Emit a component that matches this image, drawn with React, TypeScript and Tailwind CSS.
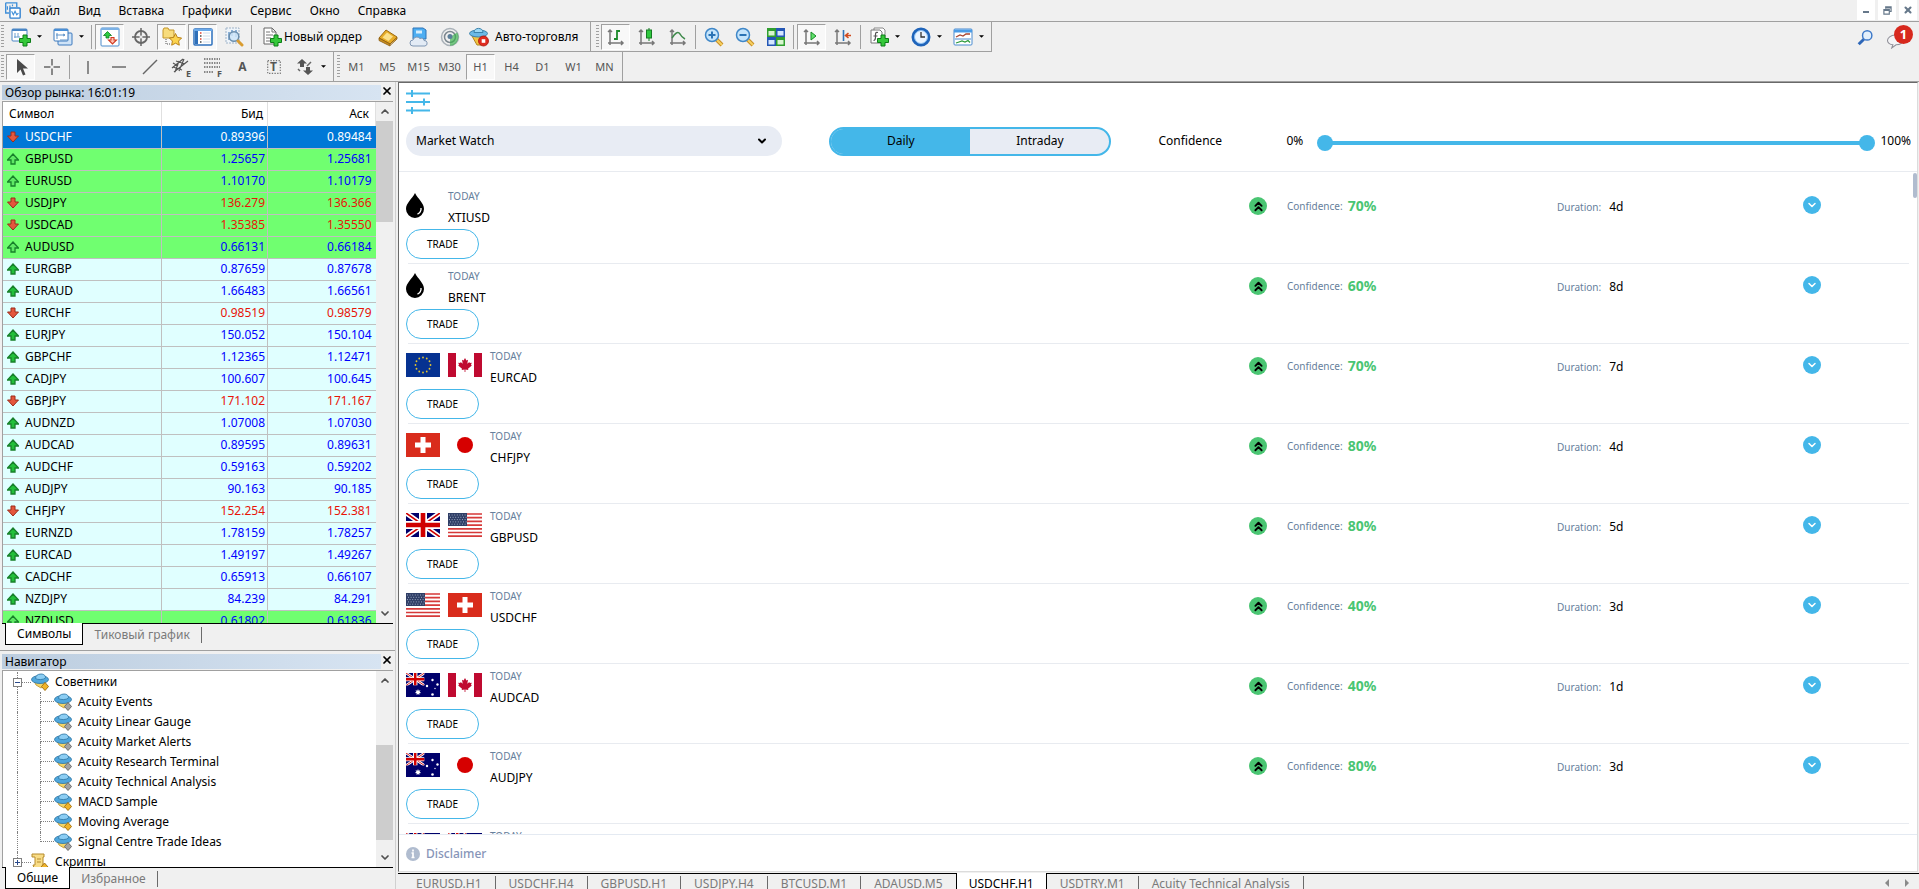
import React, { useState } from "react";
import { ChevronDown, ChevronUp, ChevronsUp, X } from "lucide-react";
import clsx from "clsx";

type IconProps = { children: React.ReactNode; size?: string };

const Icon = ({ children, size = "size-5" }: IconProps) => (
  <svg viewBox="0 0 20 20" fill="none" className={clsx("shrink-0", size)} aria-hidden="true">
    {children}
  </svg>
);

const GreenPlus = () => (
  <path
    d="M12 8h4v3.500h3.500v4H16V19h-4v-3.500H8.500v-4H12z"
    fill="#35c83a"
    stroke="#0d7d18"
    strokeWidth="1"
  />
);

const icons = {
  app: (
    <>
      <path d="M2 1h13v5M2 1v12h4" stroke="#3f8fd8" strokeWidth="1.600" />
      <path d="M4 9V5M7 8V4M10 5V3" stroke="#3f8fd8" strokeWidth="1.400" />
      <rect x="7" y="7" width="12" height="12" rx="1" fill="#fff" stroke="#2d7fcf" strokeWidth="1.600" />
      <path d="M9 11l2 4 2-4 2 4 2-2" stroke="#3f8fd8" strokeWidth="1.300" />
    </>
  ),
  newChart: (
    <>
      <rect x="1" y="2" width="15" height="12" rx="1" fill="#fff" stroke="#4a86c5" />
      <path d="M1 3h15" stroke="#4a86c5" strokeWidth="2" />
      <path d="M4 6v5M7 6v4M3 10h6" stroke="#6b9fd0" />
      <GreenPlus />
    </>
  ),
  profiles: (
    <>
      <rect x="5" y="6" width="14" height="12" rx="1" fill="#cfe3f7" stroke="#3a78bd" />
      <rect x="1" y="2" width="14" height="12" rx="1" fill="#fff" stroke="#3a78bd" />
      <path d="M1 3h14" stroke="#4a8fd6" strokeWidth="2" />
      <path d="M4 6v6M3 8h9M10 7l2 1-2 1M7 13h8" stroke="#5f93c9" />
    </>
  ),
  marketWatch: (
    <>
      <rect x="1" y="1" width="18" height="18" rx="1" fill="#fff" stroke="#4d8ccc" />
      <path d="M1 2h18" stroke="#7cb2e6" strokeWidth="2" />
      <path d="M3.500 8.500L7.500 4.500l4 4H9v2.500H6V8.500z" fill="#2ecc40" stroke="#0e7d20" strokeWidth=".8" />
      <path d="M8.500 13H11v-2.500h3V13h2.500l-4 4z" fill="#ffc2b4" stroke="#d13a20" strokeWidth="1.100" />
    </>
  ),
  target: (
    <>
      <circle cx="10" cy="10" r="6" stroke="#666" strokeWidth="1.800" />
      <path d="M10 1v18M1 10h18" stroke="#666" strokeWidth="1.500" />
      <path d="M8.500 10h3M10 8.500v3" stroke="#f0f0f0" strokeWidth="1.500" />
    </>
  ),
  folderStar: (
    <>
      <path d="M1 3l1-2h4l1 2h5v8H1z" fill="#f8dc7c" stroke="#c3962a" />
      <path d="M4 12v5h4" stroke="#555" strokeDasharray="1 1" />
      <path
        d="M13.500 6.500l1.900 3.900 4.200.6-3 3 .7 4.200-3.800-2-3.800 2 .7-4.200-3-3 4.200-.6z"
        fill="#fbd34e"
        stroke="#b98218"
      />
    </>
  ),
  terminal: (
    <>
      <rect x="1" y="2" width="18" height="16" rx="1" fill="#fff" stroke="#2c70bd" strokeWidth="1.500" />
      <path d="M1 3h18" stroke="#6aa9ea" strokeWidth="2" />
      <rect x="2" y="4" width="3" height="13" fill="#2d6fb9" />
      <path d="M7 6h1.500M7 12h1.500" stroke="#e04030" strokeWidth="1.500" />
      <path d="M7 9h1.500M7 15h1.500" stroke="#444" strokeWidth="1.300" />
      <path d="M10 6h7M10 9h7M10 12h7M10 15h7" stroke="#cfdceb" />
    </>
  ),
  tester: (
    <>
      <path d="M2 1h13v15H2z" fill="#eef4fa" stroke="#9fb3c8" strokeDasharray="2 1" />
      <path d="M5 13V5M8 9V3M12 10V3" stroke="#5b8fc4" strokeWidth="1.300" />
      <circle cx="10" cy="9.500" r="4.800" fill="#cfe5f8" fillOpacity=".85" stroke="#6b8ead" strokeWidth="1.500" />
      <path d="M14 14l4 4" stroke="#d99c30" strokeWidth="3" strokeLinecap="round" />
    </>
  ),
  order: (
    <>
      <path d="M2 1h8l4 4v12H2z" fill="#fff" stroke="#666" />
      <path d="M10 1v4h4M4 5h4M4 8h7M4 11h5M4 14h4" stroke="#777" />
      <GreenPlus />
    </>
  ),
  book: (
    <>
      <path d="M1 11l7-8 11 7-7 7z" fill="#e7ac28" stroke="#9c6a12" />
      <path d="M4.500 10.500l4.500-5 6 4-4.500 4.500z" fill="#fbe08a" />
      <path d="M1 11v2.500l11 5.500V17zM12 18.500l7-6.500v-2" fill="#c98f1e" stroke="#8a5b10" strokeWidth=".8" />
    </>
  ),
  cloud: (
    <>
      <path d="M4 1h10l3 2v9H4z" fill="#4eaef2" stroke="#2d74b8" />
      <path d="M7 3.500h6v3H7z" fill="#d8eefc" />
      <path
        d="M4 19a3 3 0 0 1 0-6 4 4 0 0 1 7-1.500 3 3 0 0 1 4 2 2.800 2.800 0 0 1 1 5.500z"
        fill="#e3ebf5"
        stroke="#7f96b3"
      />
    </>
  ),
  signal: (
    <>
      <circle cx="10" cy="10" r="8.500" stroke="#a9b1b8" strokeWidth="1.500" />
      <circle cx="10" cy="10" r="5.500" stroke="#7d8890" strokeWidth="1.500" />
      <path d="M10 10v8.700a8.500 8.500 0 0 0 8.500-8.700c0-2-.5-3-1.500-4.500z" fill="#37b24a" fillOpacity=".65" />
      <circle cx="10" cy="9.500" r="2.500" fill="#5c7f9a" />
    </>
  ),
  autoTrade: (
    <>
      <path d="M3 9h13l-3 9H8z" fill="#f1c443" stroke="#b3841d" />
      <ellipse cx="9.500" cy="6.500" rx="9" ry="3.500" fill="#6bb9e6" stroke="#3b82ab" />
      <path d="M5 5.500C5 0 14 0 14 5.500z" fill="#9ad8f6" stroke="#3b82ab" />
      <circle cx="14.500" cy="14" r="5" fill="#e02b20" stroke="#a9130c" strokeWidth=".8" />
      <rect x="12.700" y="12.200" width="3.600" height="3.600" fill="#fff" />
    </>
  ),
  bars: (
    <>
      <path d="M4 3v15M2 16h15M2 5l2-2 2 2M15 14l2 2-2 2" stroke="#777" strokeWidth="1.500" />
      <path d="M11 3v10M11 4h3M8 12h3" stroke="#1d8a2c" strokeWidth="1.800" />
    </>
  ),
  candles: (
    <>
      <path d="M4 3v15M2 16h15M2 5l2-2 2 2M15 14l2 2-2 2" stroke="#777" strokeWidth="1.500" />
      <path d="M12 1v13" stroke="#157a22" />
      <rect x="9.500" y="3" width="5" height="8" fill="#2fc83e" stroke="#157a22" />
    </>
  ),
  line: (
    <>
      <path d="M4 3v15M2 16h15M2 5l2-2 2 2M15 14l2 2-2 2" stroke="#777" strokeWidth="1.500" />
      <path d="M4 11c3-5 6-7 8-4 1 2 3 4 5 5" stroke="#3f8a4b" strokeWidth="1.500" />
    </>
  ),
  zoomIn: (
    <>
      <path d="M12 12l6 6" stroke="#c78e26" strokeWidth="4" />
      <path d="M12 12l6 6" stroke="#f6d060" strokeWidth="2" />
      <circle cx="8" cy="8" r="6.500" fill="#c4e4fb" stroke="#3f87c8" strokeWidth="1.500" />
      <path d="M4.500 8h7M8 4.500v7" stroke="#2a73b5" strokeWidth="2" />
    </>
  ),
  zoomOut: (
    <>
      <path d="M12 12l6 6" stroke="#c78e26" strokeWidth="4" />
      <path d="M12 12l6 6" stroke="#f6d060" strokeWidth="2" />
      <circle cx="8" cy="8" r="6.500" fill="#c4e4fb" stroke="#3f87c8" strokeWidth="1.500" />
      <path d="M4.500 8h7" stroke="#2a73b5" strokeWidth="2" />
    </>
  ),
  tile: (
    <>
      <path d="M1 1h9v9H1z" fill="#2f9e2f" />
      <path d="M10 1h9v9h-9z" fill="#2457b5" />
      <path d="M1 10h9v9H1z" fill="#2457b5" />
      <path d="M10 10h9v9h-9z" fill="#2f9e2f" />
      <path d="M2.500 4h6v4.500h-6zM11.500 13h6v4.500h-6z" fill="#d8f5d0" />
      <path d="M11.500 4h6v4.500h-6zM2.500 13h6v4.500h-6z" fill="#d4e6ff" />
    </>
  ),
  autoScroll: (
    <>
      <path d="M4 3v15M2 16h15M2 5l2-2 2 2M15 14l2 2-2 2" stroke="#777" strokeWidth="1.500" />
      <path d="M9 5l5 4-5 4z" fill="#5fe06a" stroke="#168a25" />
    </>
  ),
  shift: (
    <>
      <path d="M4 3v15M2 16h15M2 5l2-2 2 2M15 14l2 2-2 2" stroke="#777" strokeWidth="1.500" />
      <path d="M10.500 3v11" stroke="#2f74b8" strokeWidth="1.600" />
      <path d="M18 8.500h-5M15.500 6l-3 2.500 3 2.500" stroke="#d04a1e" strokeWidth="1.600" />
    </>
  ),
  indicators: (
    <>
      <path d="M5 3V1h9l2 2v11" fill="#fff" stroke="#888" />
      <path d="M2 3h9l2 2v11H2z" fill="#fff" stroke="#777" />
      <path d="M9 5.500c-3-1-2.500 2-2.500 4s0 4-2 4M4.500 9h4" stroke="#555" strokeWidth="1.200" />
      <GreenPlus />
    </>
  ),
  clock: (
    <>
      <circle cx="10" cy="10" r="8" fill="#eaf4ff" stroke="#1f64ba" strokeWidth="3" />
      <circle cx="10" cy="10" r="6.500" stroke="#8bc0f3" />
      <path d="M10 5v5h4" stroke="#333" strokeWidth="1.300" />
    </>
  ),
  template: (
    <>
      <rect x="1" y="2" width="18" height="16" rx="1" fill="#fff" stroke="#4a8bd0" />
      <path d="M1 4h18" stroke="#4a9be6" strokeWidth="3" />
      <path d="M3 10l4-2 3 1 3-2 4 0" stroke="#a84430" strokeWidth="1.300" />
      <path d="M2 12h16" stroke="#4a8bd0" />
      <path d="M3 16l3-1 3-1 3 1 3-1.500 2 2" stroke="#2d9a3b" strokeWidth="1.300" />
    </>
  ),
  cursor: <path d="M6 2v14l3.500-3.500 2.500 6 2.500-1-2.500-6h5z" fill="#4a4a4a" />,
  cross: <path d="M10 2v6.500M10 11.500V18M2 10h6.500M11.500 10H18" stroke="#666" strokeWidth="1.500" />,
  vline: <path d="M10 4v13" stroke="#555" strokeWidth="1.300" />,
  hline: <path d="M3 10h14" stroke="#555" strokeWidth="1.300" />,
  trend: <path d="M3 17L17 3" stroke="#666" strokeWidth="1.500" />,
  channel: (
    <path d="M1 11L12 2M3 15L17 4M2 6l5 3M5 4l9 3M2 10l9 3M4 15L8 4M8 14l5-12" stroke="#555" strokeWidth="1.200" />
  ),
  fibo: <path d="M2 2h16M2 6h16M2 10h16M2 15h9" stroke="#666" strokeWidth="1.300" strokeDasharray="1.500 1" />,
  label: (
    <rect x="3" y="3" width="14" height="14" stroke="#777" strokeWidth="1.300" strokeDasharray="1.500 1.500" />
  ),
  arrows: (
    <>
      <path d="M7 2l5 4.500H9V10H5V6.500H2zM13 18l-5-4.500h3V10h4v3.500h3z" fill="#555" />
      <path d="M3 12l2 2M12 9l4-4" stroke="#666" strokeWidth="1.500" />
    </>
  ),
  search: (
    <>
      <path d="M8 12l-6 6" stroke="#2c66b8" strokeWidth="3.500" />
      <circle cx="12" cy="7.500" r="5.500" fill="#e3effb" stroke="#3c78c8" strokeWidth="1.700" />
    </>
  ),
};

type IconName = keyof typeof icons;

const Sep = () => <span className="mx-0.5 h-6 w-px shrink-0 bg-[#a0a0a0]" />;

const Grip = () => (
  <span className="mx-px h-6 w-[3px] shrink-0 bg-[repeating-linear-gradient(#a0a0a0_0_1px,transparent_1px_3px)]" />
);

const Caret = () => (
  <svg viewBox="0 0 6 3" className="h-[3px] w-[5px] shrink-0 fill-black" aria-hidden="true">
    <path d="M0 0h6L3 3z" />
  </svg>
);

function ToolButton({
  icon,
  label,
  active,
  mark,
}: {
  icon: IconName;
  label: string;
  active?: boolean;
  mark?: string;
}) {
  return (
    <button
      aria-label={label}
      className={clsx(
        "relative mx-px flex h-[26px] w-[29px] shrink-0 items-center justify-center",
        active && "border border-b-white border-l-[#a0a0a0] border-r-white border-t-[#a0a0a0] bg-[#f8f8f8]"
      )}
    >
      <Icon>{icons[icon]}</Icon>
      {mark && (
        <span className="absolute bottom-0.5 right-1 text-[9px] font-bold leading-2 text-[#555]">{mark}</span>
      )}
    </button>
  );
}

function DropButton({ icon, label }: { icon: IconName; label: string }) {
  return (
    <button aria-label={label} className="flex h-[26px] w-[42px] shrink-0 items-center justify-center gap-1.5">
      <Icon>{icons[icon]}</Icon>
      <Caret />
    </button>
  );
}

const menuItems = ["Файл", "Вид", "Вставка", "Графики", "Сервис", "Окно", "Справка"];
const timeframes = ["M1", "M5", "M15", "M30", "H1", "H4", "D1", "W1", "MN"];

function MenuBar() {
  return (
    <div className="flex h-[22px] items-center justify-between border-b border-[#a0a0a0]">
      <nav className="flex items-center">
        <span className="ml-1 mr-2">
          <Icon size="size-[17px]">{icons.app}</Icon>
        </span>
        {menuItems.map((item) => (
          <button key={item} className="mr-[18px] leading-5">
            {item}
          </button>
        ))}
      </nav>
      <div className="mr-0.5 flex gap-[3px] self-start text-[#66788a]">
        <button aria-label="Свернуть" className="flex h-5 w-[18px] items-center justify-center bg-white">
          <span className="mt-1 h-0.5 w-1.5 bg-[#66788a]" />
        </button>
        <button aria-label="Восстановить" className="flex h-5 w-[18px] items-center justify-center bg-white">
          <svg viewBox="0 0 10 10" className="size-[9px]" fill="none" stroke="currentColor">
            <path d="M3 3V1h6v5H7M3 2h6" strokeWidth="1.300" />
            <path d="M1 4h6v5H1zM1 5h6" strokeWidth="1.300" />
          </svg>
        </button>
        <button aria-label="Закрыть" className="flex h-5 w-[18px] items-center justify-center bg-white">
          <X className="size-[10px]" strokeWidth={5} />
        </button>
      </div>
    </div>
  );
}

function Toolbars() {
  return (
    <>
      <div className="flex h-[30px] items-center justify-between">
        <div className="flex h-full items-center border-b border-r border-[#a0a0a0] pr-0.5">
          <Grip />
          <DropButton icon="newChart" label="Новый график" />
          <DropButton icon="profiles" label="Профили" />
          <Sep />
          <ToolButton icon="marketWatch" label="Обзор рынка" active />
          <ToolButton icon="target" label="Окно данных" />
          <ToolButton icon="folderStar" label="Навигатор" active />
          <ToolButton icon="terminal" label="Терминал" active />
          <ToolButton icon="tester" label="Тестер стратегий" />
          <Sep />
          <button className="ml-2 flex w-[110px] items-center gap-0.5 whitespace-nowrap">
            <Icon>{icons.order}</Icon>
            Новый ордер
          </button>
          <ToolButton icon="book" label="MetaEditor" />
          <ToolButton icon="cloud" label="VPS" />
          <ToolButton icon="signal" label="Сигналы" />
          <button className="ml-1 flex w-[121px] items-center gap-1.5 whitespace-nowrap">
            <Icon>{icons.autoTrade}</Icon>
            Авто-торговля
          </button>
          <span className="mr-1 h-[29px] w-px bg-[#a0a0a0]" />
          <Grip />
          <ToolButton icon="bars" label="Бары" active />
          <ToolButton icon="candles" label="Свечи" />
          <ToolButton icon="line" label="Линия" />
          <Sep />
          <ToolButton icon="zoomIn" label="Приблизить" />
          <ToolButton icon="zoomOut" label="Отдалить" />
          <ToolButton icon="tile" label="Окна рядом" />
          <Sep />
          <ToolButton icon="autoScroll" label="Автопрокрутка" active />
          <ToolButton icon="shift" label="Сдвиг графика" />
          <Sep />
          <DropButton icon="indicators" label="Индикаторы" />
          <DropButton icon="clock" label="Периоды" />
          <DropButton icon="template" label="Шаблоны" />
        </div>
        <div className="mr-1.5 flex items-center gap-3">
          <button aria-label="Поиск">
            <Icon size="size-[17px]">{icons.search}</Icon>
          </button>
          <button aria-label="Уведомления" className="relative h-6 w-[27px]">
            <svg viewBox="0 0 16 14" className="absolute bottom-0 left-0 h-[15px] w-[18px]">
              <path d="M8 1c4 0 7 2 7 5s-3 4-6 4l-4 3 1-3c-3 0-5-2-5-4s3-5 7-5z" fill="#f4f4f6" stroke="#8f8f98" />
            </svg>
            <span className="absolute right-0 top-0 size-[19px] rounded-full bg-[#d7281d] text-[13px] font-bold leading-[19px] text-white">
              1
            </span>
          </button>
        </div>
      </div>
      <div className="flex h-[30px] items-center border-b border-[#a0a0a0]">
        <Grip />
        <ToolButton icon="cursor" label="Курсор" active />
        <ToolButton icon="cross" label="Перекрестие" />
        <Sep />
        <ToolButton icon="vline" label="Вертикальная линия" />
        <ToolButton icon="hline" label="Горизонтальная линия" />
        <ToolButton icon="trend" label="Трендовая линия" />
        <ToolButton icon="channel" label="Канал" mark="E" />
        <ToolButton icon="fibo" label="Фибоначчи" mark="F" />
        <button className="w-[31px] font-bold text-[#555]">A</button>
        <button className="relative mx-px flex h-[26px] w-[29px] items-center justify-center">
          <Icon size="size-[18px]">{icons.label}</Icon>
          <span className="absolute font-bold text-[#555]">T</span>
        </button>
        <DropButton icon="arrows" label="Стрелки" />
        <span className="mx-0.5 h-[29px] w-px bg-[#a0a0a0]" />
        <Grip />
        {timeframes.map((tf) => (
          <button
            key={tf}
            className={clsx(
              "mx-px h-[26px] w-[29px] shrink-0 text-[11px] text-[#555]",
              tf === "H1" && "border border-b-white border-l-[#a0a0a0] border-r-white border-t-[#a0a0a0] bg-[#f8f8f8]"
            )}
          >
            {tf}
          </button>
        ))}
        <span className="mx-0.5 h-[29px] w-px bg-[#a0a0a0]" />
      </div>
    </>
  );
}

type Quote = { symbol: string; bid: string; ask: string; down?: boolean; green?: boolean };

const quotes: Quote[] = [
  { symbol: "USDCHF", bid: "0.89396", ask: "0.89484", down: true },
  { symbol: "GBPUSD", bid: "1.25657", ask: "1.25681", green: true },
  { symbol: "EURUSD", bid: "1.10170", ask: "1.10179", green: true },
  { symbol: "USDJPY", bid: "136.279", ask: "136.366", down: true, green: true },
  { symbol: "USDCAD", bid: "1.35385", ask: "1.35550", down: true, green: true },
  { symbol: "AUDUSD", bid: "0.66131", ask: "0.66184", green: true },
  { symbol: "EURGBP", bid: "0.87659", ask: "0.87678" },
  { symbol: "EURAUD", bid: "1.66483", ask: "1.66561" },
  { symbol: "EURCHF", bid: "0.98519", ask: "0.98579", down: true },
  { symbol: "EURJPY", bid: "150.052", ask: "150.104" },
  { symbol: "GBPCHF", bid: "1.12365", ask: "1.12471" },
  { symbol: "CADJPY", bid: "100.607", ask: "100.645" },
  { symbol: "GBPJPY", bid: "171.102", ask: "171.167", down: true },
  { symbol: "AUDNZD", bid: "1.07008", ask: "1.07030" },
  { symbol: "AUDCAD", bid: "0.89595", ask: "0.89631" },
  { symbol: "AUDCHF", bid: "0.59163", ask: "0.59202" },
  { symbol: "AUDJPY", bid: "90.163", ask: "90.185" },
  { symbol: "CHFJPY", bid: "152.254", ask: "152.381", down: true },
  { symbol: "EURNZD", bid: "1.78159", ask: "1.78257" },
  { symbol: "EURCAD", bid: "1.49197", ask: "1.49267" },
  { symbol: "CADCHF", bid: "0.65913", ask: "0.66107" },
  { symbol: "NZDJPY", bid: "84.239", ask: "84.291" },
  { symbol: "NZDUSD", bid: "0.61802", ask: "0.61836", green: true },
];

const Tick = ({ down, green }: { down?: boolean; green?: boolean }) => (
  <svg viewBox="0 0 12 12" className="size-3 shrink-0" aria-hidden="true">
    {down ? (
      <path d="M4 1h4v4h3.500L6 11 .5 5H4z" fill="#e4573d" stroke="#9c2c1a" />
    ) : (
      <path d="M6 1l5.500 6H8v4H4V7H.5z" fill={green ? "#5fe865" : "#22c03a"} stroke="#17802a" strokeWidth="1.300" />
    )}
  </svg>
);

function PanelTitle({ title }: { title: string }) {
  return (
    <div className="flex h-4 shrink-0 items-start">
      <h2 className="h-[15px] flex-1 bg-linear-to-r from-[#bccddf] to-[#d7e4f2] pl-[3px] leading-4">{title}</h2>
      <button aria-label={"Закрыть " + title} className="flex w-3 justify-center">
        <X className="size-3" strokeWidth={3.5} />
      </button>
    </div>
  );
}

// thumb sits at `top` percent of the track and takes `size` percent of it
function ScrollBar({ top, size }: { top: number; size: number }) {
  return (
    <div className="flex w-[17px] shrink-0 flex-col items-center bg-[#f0f0f0] text-[#505050]">
      <ChevronUp className="h-[19px] w-3 shrink-0" strokeWidth={3.5} />
      <div className="relative w-full flex-1">
        <div className="absolute w-full bg-[#cdcdcd]" style={{ top: top + "%", height: size + "%" }} />
      </div>
      <ChevronDown className="h-[19px] w-3 shrink-0" strokeWidth={3.5} />
    </div>
  );
}

function PanelTabs({ active, other }: { active: string; other: string }) {
  return (
    <div className="flex h-[22px] shrink-0">
      <span className="w-[3px] border-t border-black" />
      <button className="border-x border-b border-black bg-white px-[11px] leading-5">{active}</button>
      <div className="flex flex-1 items-center border-t border-black">
        <button className="px-[11px] text-[#7a7a7a]">{other}</button>
        <span className="h-4 w-px bg-[#6b6b6b]" />
      </div>
    </div>
  );
}

function MarketWatch() {
  return (
    <section className="flex min-h-0 flex-1 flex-col px-0.5 pb-[5px] pt-[3px]">
      <PanelTitle title="Обзор рынка: 16:01:19" />
      <div className="flex min-h-0 flex-1 overflow-hidden border-l border-t border-[#a0a0a0] bg-white">
        <div className="min-w-0 flex-1 overflow-hidden">
          <table className="w-full table-fixed border-collapse">
            <thead>
              <tr className="h-6">
                <th className="border-r border-[#e0e0e0] pl-1.5 text-left font-normal">Символ</th>
                <th className="w-[106px] border-r border-[#e0e0e0] pr-1 text-right font-normal">Бид</th>
                <th className="w-[108px] border-r border-[#e0e0e0] pr-1.5 text-right font-normal">Аск</th>
              </tr>
            </thead>
            <tbody>
              {quotes.map((q, i) => (
                <tr
                  key={q.symbol}
                  className={clsx(
                    "h-[22px] border-b border-[#c0c0c0]",
                    i === 0 ? "bg-[#0078d7] text-white" : q.green ? "bg-[#70ff70]" : "bg-[#e0ffff]"
                  )}
                >
                  <td className="border-r border-[#c0c0c0] py-0 pl-1">
                    <span className="flex items-center gap-1.5">
                      <Tick down={q.down} green={q.green} />
                      {q.symbol}
                    </span>
                  </td>
                  <td
                    className={clsx(
                      "border-r border-[#c0c0c0] py-0 pr-0.5 text-right",
                      i > 0 && (q.down ? "text-[#e81408]" : "text-[#0000ff]")
                    )}
                  >
                    {q.bid}
                  </td>
                  <td className={clsx("py-0 pr-1 text-right", i > 0 && (q.down ? "text-[#e81408]" : "text-[#0000ff]"))}>
                    {q.ask}
                  </td>
                </tr>
              ))}
            </tbody>
          </table>
        </div>
        <ScrollBar top={0} size={21} />
      </div>
      <PanelTabs active="Символы" other="Тиковый график" />
    </section>
  );
}

const experts = [
  { name: "Acuity Events" },
  { name: "Acuity Linear Gauge" },
  { name: "Acuity Market Alerts" },
  { name: "Acuity Research Terminal" },
  { name: "Acuity Technical Analysis" },
  { name: "MACD Sample", gold: true },
  { name: "Moving Average", gold: true },
  { name: "Signal Centre Trade Ideas" },
];

const ExpertIcon = ({ gold }: { gold?: boolean }) => (
  <svg viewBox="0 0 18 18" className="size-[18px] shrink-0" aria-hidden="true">
    <path d="M3 8h11l-1 5-3 2-5-3z" fill="#f3d468" stroke="#b9902c" strokeWidth=".8" />
    <ellipse cx="9" cy="6.500" rx="8.500" ry="4" fill="#4fa6dc" stroke="#2d75a2" strokeWidth=".8" />
    <path d="M4.500 5.500C4.500 3 6.500 1 10 1s4.500 2 4.500 4c-2 2-8 2-10 .5z" fill="#8bcdf3" stroke="#2d75a2" strokeWidth=".8" />
    <path
      d="M14 9.500l3.500 4L14 17.500l-3.500-4z"
      fill={gold ? "#f0b429" : "#a3a3a3"}
      stroke={gold ? "#a87412" : "#6d6d6d"}
    />
  </svg>
);

const ScriptIcon = () => (
  <svg viewBox="0 0 18 18" className="size-[18px] shrink-0" aria-hidden="true">
    <path d="M1 1h12v3h-1v8l2 3H3l-1-3h2V4H1z" fill="#f8dc86" stroke="#b58a2c" />
    <path d="M6 6h4M6 9h4" stroke="#b58a2c" />
    <path d="M13.500 10l3.500 4-3.500 3.500L10 14z" fill="#f0b429" stroke="#a87412" />
  </svg>
);

function TreeNode({ label, open, children }: { label: string; open?: boolean; children: React.ReactNode }) {
  return (
    <div className="flex h-5 items-center">
      <div className="ml-2.5 flex h-5 w-[9px] flex-col items-center">
        <span className="flex-1 border-l border-dotted border-[#808080]" />
        <button aria-label={label} className="relative size-[9px] border border-[#808080] bg-white">
          <span className="absolute left-px top-[3px] h-px w-[5px] bg-[#2b4a8b]" />
          {!open && <span className="absolute left-[3px] top-px h-[5px] w-px bg-[#2b4a8b]" />}
        </button>
        <span className="flex-1 border-l border-dotted border-[#808080]" />
      </div>
      <span className="w-[9px] border-t border-dotted border-[#808080]" />
      {children}
      <span className="ml-1.5">{label}</span>
    </div>
  );
}

function Navigator() {
  return (
    <section className="flex h-[239px] shrink-0 flex-col border-t border-[#a0a0a0] px-0.5 pt-[3px]">
      <PanelTitle title="Навигатор" />
      <div className="flex min-h-0 flex-1 overflow-hidden border-l border-t border-[#a0a0a0] bg-white">
        <div className="flex-1 overflow-hidden pt-px">
          <TreeNode label="Советники" open>
            <ExpertIcon gold />
          </TreeNode>
          <ul>
            {experts.map((e, i) => (
              <li key={e.name} className="flex h-5 items-center">
                <span className="ml-3.5 h-5 w-[23px] border-l border-dotted border-[#808080]" />
                <span className="h-5 w-3.5">
                  <span className="block h-2.5 border-b border-l border-dotted border-[#808080]" />
                  {i < experts.length - 1 && <span className="block h-2.5 border-l border-dotted border-[#808080]" />}
                </span>
                <ExpertIcon gold={e.gold} />
                <span className="ml-1.5">{e.name}</span>
              </li>
            ))}
          </ul>
          <TreeNode label="Скрипты">
            <ScriptIcon />
          </TreeNode>
        </div>
        <ScrollBar top={35} size={60} />
      </div>
      <PanelTabs active="Общие" other="Избранное" />
    </section>
  );
}

const UnionJack = () => (
  <>
    <path fill="#00006b" d="M0 0h34v24H0z" />
    <path d="M0 0l34 24M34 0L0 24" stroke="#fff" strokeWidth="5" />
    <path d="M0 0l34 24M34 0L0 24" stroke="#d00000" strokeWidth="1.600" />
    <path d="M17 0v24M0 12h34" stroke="#fff" strokeWidth="8" />
    <path d="M17 0v24M0 12h34" stroke="#d00000" strokeWidth="4.600" />
  </>
);

const starRing = Array.from({ length: 12 }, (_, i) => {
  const a = (i * Math.PI) / 6;
  return { x: 17 + 7.5 * Math.cos(a), y: 12 + 7.5 * Math.sin(a) };
});

const flags = {
  EUR: (
    <>
      <path fill="#063291" d="M0 0h34v24H0z" />
      {starRing.map((s, i) => (
        <circle key={i} cx={s.x} cy={s.y} r=".9" fill="#e6c52f" />
      ))}
    </>
  ),
  CAD: (
    <>
      <path fill="#fff" d="M0 0h34v24H0z" />
      <path fill="#bf0a30" d="M0 0h8v24H0zM26 0h8v24h-8z" />
      <path
        fill="#bf0a30"
        d="M17 5l1.400 2.600 1.600-.8-.7 4 2-1.900.5 1.200 2-.3-.8 2 .8.8-3.800 3.200.3 1.200-2.900-.4V19h-.8v-2.400l-2.900.4.300-1.200-3.800-3.200.8-.8-.8-2 2 .3.500-1.200 2 1.900-.7-4 1.600.8z"
      />
    </>
  ),
  CHF: (
    <>
      <path fill="#d92c1c" d="M0 0h34v24H0z" />
      <path fill="#fff" d="M14.500 4h5v5.500H25v5h-5.500V20h-5v-5.500H9v-5h5.500z" />
    </>
  ),
  JPY: (
    <>
      <path fill="#fff" d="M0 0h34v24H0z" />
      <circle cx="17" cy="12" r="8" fill="#d60000" />
    </>
  ),
  GBP: <UnionJack />,
  USD: (
    <>
      <path fill="#fff" d="M0 0h34v24H0z" />
      <path
        d="M0 1h34M0 4.700h34M0 8.400h34M0 12.100h34M0 15.800h34M0 19.500h34M0 23.200h34"
        stroke="#d63a3a"
        strokeWidth="1.700"
      />
      <path fill="#2f3e66" d="M0 0h19v13H0z" />
      <path
        d="M1 2h17M2 4.300h17M1 6.600h17M2 8.900h17M1 11.200h17"
        stroke="#a9b4cc"
        strokeWidth=".9"
        strokeDasharray="1 1.600"
      />
    </>
  ),
  AUD: (
    <>
      <path fill="#00006b" d="M0 0h34v24H0z" />
      <svg width="18.500" height="12.500" viewBox="0 0 34 24" preserveAspectRatio="none">
        <UnionJack />
      </svg>
      <path
        fill="#fff"
        d="M12 16l.7 1.700 1.800-.5-.9 1.600 1.500 1.100-1.800.3.100 1.900-1.400-1.200-1.400 1.200.1-1.900-1.800-.3 1.500-1.100-.9-1.600 1.800.5z"
      />
      <g fill="#fff">
        <circle cx="26.500" cy="7" r="1.200" />
        <circle cx="31.500" cy="11.500" r="1.200" />
        <circle cx="21" cy="13" r="1.200" />
        <circle cx="29" cy="15.500" r=".7" />
        <circle cx="26.500" cy="21.500" r="1.300" />
      </g>
    </>
  ),
};

type Currency = keyof typeof flags;

const Flag = ({ code }: { code: Currency }) => (
  <svg viewBox="0 0 34 24" className="h-6 w-[34px] shrink-0" role="img" aria-label={code}>
    {flags[code]}
  </svg>
);

const Drop = () => (
  <svg viewBox="0 0 18 25" className="h-[25px] w-[34px] shrink-0" preserveAspectRatio="xMinYMin meet" aria-hidden="true">
    <path d="M9 0c3 6 9 10 9 16a9 9 0 0 1-18 0C0 10 6 6 9 0z" />
    <path d="M15 15c.5 3-1.500 5.500-3.500 6" stroke="#fff" strokeWidth="1.300" fill="none" />
  </svg>
);

type Idea = { symbol: string; pair?: [Currency, Currency]; confidence: number; days: number };

const ideas: Idea[] = [
  { symbol: "XTIUSD", confidence: 70, days: 4 },
  { symbol: "BRENT", confidence: 60, days: 8 },
  { symbol: "EURCAD", pair: ["EUR", "CAD"], confidence: 70, days: 7 },
  { symbol: "CHFJPY", pair: ["CHF", "JPY"], confidence: 80, days: 4 },
  { symbol: "GBPUSD", pair: ["GBP", "USD"], confidence: 80, days: 5 },
  { symbol: "USDCHF", pair: ["USD", "CHF"], confidence: 40, days: 3 },
  { symbol: "AUDCAD", pair: ["AUD", "CAD"], confidence: 40, days: 1 },
  { symbol: "AUDJPY", pair: ["AUD", "JPY"], confidence: 80, days: 3 },
  { symbol: "AUDNZD", pair: ["AUD", "AUD"], confidence: 80, days: 3 },
];

function IdeaRow({ idea }: { idea: Idea }) {
  return (
    <li>
      <div className="grid h-[79px] grid-cols-[843fr_38fr_270fr_246fr_106fr]">
        <div>
          <div className="flex h-[45px] gap-2 pt-[9px]">
            {idea.pair ? (
              <>
                <Flag code={idea.pair[0]} />
                <Flag code={idea.pair[1]} />
              </>
            ) : (
              <Drop />
            )}
            <div className="-mt-2 leading-[22px]">
              <p className="text-[10px] leading-[22px] text-[#66809c]">TODAY</p>
              <p>{idea.symbol}</p>
            </div>
          </div>
          <button className="h-[30px] w-[73px] rounded-full border border-[#44b7e9] text-[10px]">TRADE</button>
        </div>
        <div className="pt-[13px]">
          <span className="flex size-[18px] items-center justify-center rounded-full bg-[#49c572]">
            <ChevronsUp className="size-[15px]" strokeWidth={3} />
          </span>
        </div>
        <div className="flex h-11 items-center gap-[5px]">
          <span className="text-[10px] text-[#66809c]">Confidence:</span>
          <span className="text-sm font-bold text-[#49c572]">{idea.confidence}%</span>
        </div>
        <div className="flex h-[46px] items-center gap-2">
          <span className="text-[10px] text-[#66809c]">Duration:</span>
          <span>{idea.days}d</span>
        </div>
        <div className="pt-3">
          <button
            aria-label={"Details " + idea.symbol}
            className="flex size-[18px] items-center justify-center rounded-full bg-[#44b7e9] text-white"
          >
            <ChevronDown className="size-3" strokeWidth={3} />
          </button>
        </div>
      </div>
      <hr className="ml-0.5 border-[#e8ebf0]" />
    </li>
  );
}

const rangeClass =
  "pointer-events-none col-start-1 row-start-1 h-4 w-full appearance-none bg-transparent [&::-webkit-slider-thumb]:pointer-events-auto [&::-webkit-slider-thumb]:size-4 [&::-webkit-slider-thumb]:appearance-none [&::-webkit-slider-thumb]:rounded-full [&::-webkit-slider-thumb]:bg-[#44b7e9]";

function Filters() {
  const [mode, setMode] = useState("Daily");
  const [low, setLow] = useState(0);
  const [high, setHigh] = useState(100);

  return (
    <div className="border-b border-[#e8ebf0] pb-[15px] pl-[7px] pr-1.5 pt-[7px]">
      <svg viewBox="0 0 24 24" className="size-6" stroke="#44b7e9" strokeWidth="2" aria-hidden="true">
        <path d="M0 3.500h24M0 12h24M0 20.500h24M6 0v7M18 8.500v7M6 17v7" />
      </svg>
      <div className="mt-3 flex items-center">
        <div className="relative w-1/4">
          <select
            aria-label="Watch list"
            className="h-[30px] w-full appearance-none rounded-full bg-[#e8ecf4] px-2.5"
          >
            <option>Market Watch</option>
          </select>
          <ChevronDown className="pointer-events-none absolute right-3.5 top-[9px] size-3" strokeWidth={4} />
        </div>
        <div className="w-1/4">
          <div className="mx-auto flex h-[29px] w-3/4 overflow-hidden rounded-full border-2 border-[#44b7e9] bg-[#e8ecf4]">
            {["Daily", "Intraday"].map((m) => (
              <button
                key={m}
                aria-pressed={mode === m}
                onClick={() => setMode(m)}
                className={clsx("flex-1", mode === m && "bg-[#44b7e9]")}
              >
                {m}
              </button>
            ))}
          </div>
        </div>
        <span className="w-32">Confidence</span>
        <div className="flex flex-1 items-center">
          <span className="w-[30px]">0%</span>
          <div className="mt-1 grid flex-1 items-center">
            <span className="col-start-1 row-start-1 mx-2 h-1 bg-[#44b7e9]" />
            <input
              type="range"
              aria-label="Minimum confidence"
              value={low}
              onChange={(e) => setLow(Number(e.target.value))}
              className={rangeClass}
            />
            <input
              type="range"
              aria-label="Maximum confidence"
              value={high}
              onChange={(e) => setHigh(Number(e.target.value))}
              className={rangeClass}
            />
          </div>
          <span className="ml-[5px]">100%</span>
        </div>
      </div>
    </div>
  );
}

const chartTabs = [
  "EURUSD.H1",
  "USDCHF.H4",
  "GBPUSD.H1",
  "USDJPY.H4",
  "BTCUSD.M1",
  "ADAUSD.M5",
  "USDCHF.H1",
  "USDTRY.M1",
  "Acuity Technical Analysis",
];

function ChartTabs() {
  return (
    <div className="flex h-4 shrink-0 items-start overflow-hidden">
      <span className="h-4 w-[5px] border-t border-black" />
      {chartTabs.map((tab, i) =>
        i === 6 ? (
          <button key={tab} className="h-4 border-x border-black bg-white px-3 pt-px leading-5">
            {tab}
          </button>
        ) : (
          <button key={tab} className="flex h-4 items-start border-t border-black text-[#7a7a7a]">
            <span className="px-[13px] leading-5">{tab}</span>
            {i !== 5 && <span className="mt-0.5 h-4 w-px bg-[#6b6b6b]" />}
          </button>
        )
      )}
      <span className="flex h-4 flex-1 items-start justify-end gap-4 border-t border-black pr-2.5 pt-[5px]">
        <svg viewBox="0 0 4 8" className="h-2 w-1 fill-[#8a8a8a]">
          <path d="M4 0v8L0 4z" />
        </svg>
        <svg viewBox="0 0 4 8" className="h-2 w-1 fill-[#8a8a8a]">
          <path d="M0 0v8l4-4z" />
        </svg>
      </span>
    </div>
  );
}

function TradeIdeas() {
  return (
    <main className="ml-0.5 flex min-w-0 flex-1 flex-col">
      <div className="mr-px flex min-h-0 flex-1 flex-col border border-b-[#dcdcdc] border-l-[#696969] border-r-[#dcdcdc] border-t-[#696969] bg-white">
        <Filters />
        <div className="relative min-h-0 flex-1 overflow-hidden pl-[7px] pr-2 pt-3">
          <ul>
            {ideas.map((idea) => (
              <IdeaRow key={idea.symbol} idea={idea} />
            ))}
          </ul>
          <span className="absolute right-0 top-px h-[25px] w-1 rounded-full bg-[#b0bccf]" />
        </div>
        <div className="flex h-[37px] shrink-0 items-center gap-1.5 border-t border-[#e4eaf2] pl-[7px] pt-0.5 text-[#8795b8]">
          <svg viewBox="0 0 14 14" className="size-3.5" aria-hidden="true">
            <circle cx="7" cy="7" r="7" fill="#b0bccf" />
            <path d="M7 2.500v2M5.500 6H7v4.500M5.500 10.500h3" stroke="#fff" strokeWidth="1.700" fill="none" />
          </svg>
          <button className="font-medium">Disclaimer</button>
        </div>
      </div>
      <div className="mt-px">
        <ChartTabs />
      </div>
    </main>
  );
}

export default function App() {
  return (
    <div className="flex h-screen flex-col overflow-hidden bg-[#f0f0f0] font-['Noto_Sans',sans-serif] text-[12px] leading-4 text-black">
      <MenuBar />
      <Toolbars />
      <div className="flex min-h-0 flex-1">
        <aside className="flex w-[396px] shrink-0 flex-col overflow-hidden border-r border-[#d0d0d0]">
          <MarketWatch />
          <Navigator />
        </aside>
        <TradeIdeas />
      </div>
    </div>
  );
}
